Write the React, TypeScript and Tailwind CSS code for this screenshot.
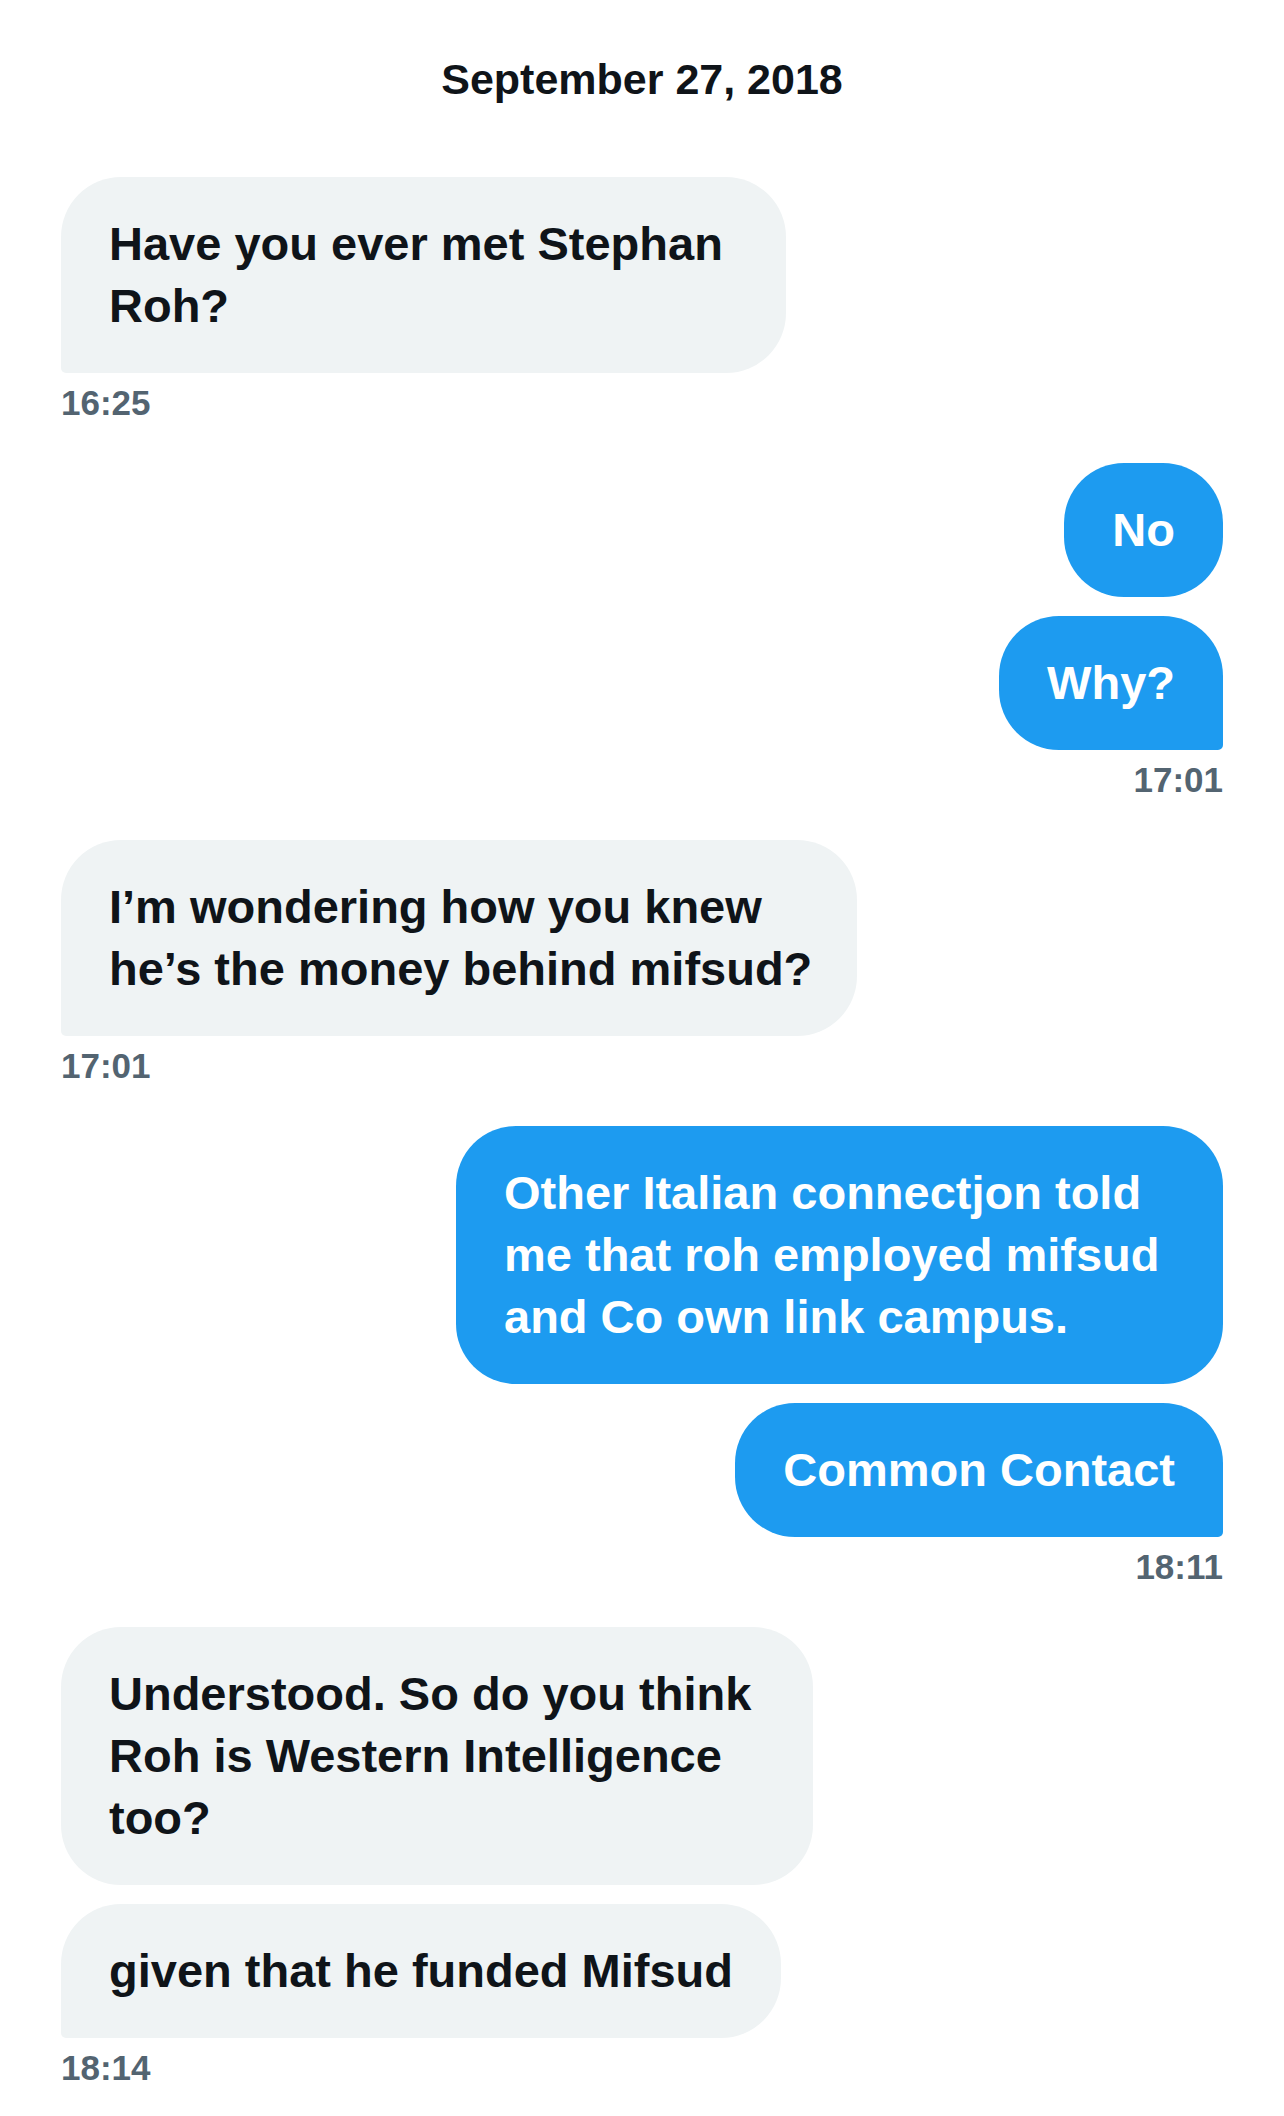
import React from 'react';
import clsx from 'clsx';

type Msg = { lines: string[]; width?: string; tail?: boolean };
type Group = { side: 'in' | 'out'; time: string; msgs: Msg[] };

const groups: Group[] = [
    {
        side: 'in',
        time: '16:25',
        msgs: [{ lines: ['Have you ever met Stephan', 'Roh?'], width: 'w-[725px]', tail: true }],
    },
    {
        side: 'out',
        time: '17:01',
        msgs: [{ lines: ['No'] }, { lines: ['Why?'], tail: true }],
    },
    {
        side: 'in',
        time: '17:01',
        msgs: [{ lines: ['I\u2019m wondering how you knew', 'he\u2019s the money behind mifsud?'], width: 'w-[796px]', tail: true }],
    },
    {
        side: 'out',
        time: '18:11',
        msgs: [
            { lines: ['Other Italian connectjon told', 'me that roh employed mifsud', 'and Co own link campus.'], width: 'w-[767px]' },
            { lines: ['Common Contact'], tail: true },
        ],
    },
    {
        side: 'in',
        time: '18:14',
        msgs: [
            { lines: ['Understood. So do you think', 'Roh is Western Intelligence', 'too?'], width: 'w-[752px]' },
            { lines: ['given that he funded Mifsud'], tail: true },
        ],
    },
];

const Bubble = ({ msg, side }: { msg: Msg; side: 'in' | 'out' }) => (
    <div
        className={clsx(
            'rounded-[60px] px-[48px] py-[36px] text-[47px] font-bold leading-[62px] whitespace-nowrap',
            msg.width,
            side === 'in' ? 'bg-[#eff3f4] text-[#0f1419]' : 'bg-[#1d9bf0] text-white',
            msg.tail && (side === 'in' ? 'rounded-bl-[5px]' : 'rounded-br-[5px]')
        )}
    >
        {msg.lines.map((line, i) => (
            <div key={i}>{line}</div>
        ))}
    </div>
);

export default function App() {
    return (
        <div className="min-h-screen bg-white font-['Liberation_Sans',Arial,sans-serif] text-[#0f1419]">
            <div className="px-[61px] pb-[30px]">
                {/* date divider */}
                <div className="pt-[58px] text-center text-[43px] font-bold leading-none">September 27, 2018</div>

                <div className="mt-[76px] flex flex-col gap-[43px]">
                    {groups.map((g, gi) => (
                        <div key={gi} className={clsx('flex flex-col', g.side === 'out' ? 'items-end' : 'items-start')}>
                            <div className={clsx('flex flex-col gap-[19px]', g.side === 'out' ? 'items-end' : 'items-start')}>
                                {g.msgs.map((m, mi) => (
                                    <Bubble key={mi} msg={m} side={g.side} />
                                ))}
                            </div>
                            <div className="mt-[12px] text-[35px] font-bold leading-none text-[#536471]">{g.time}</div>
                        </div>
                    ))}
                </div>
            </div>
        </div>
    );
}
